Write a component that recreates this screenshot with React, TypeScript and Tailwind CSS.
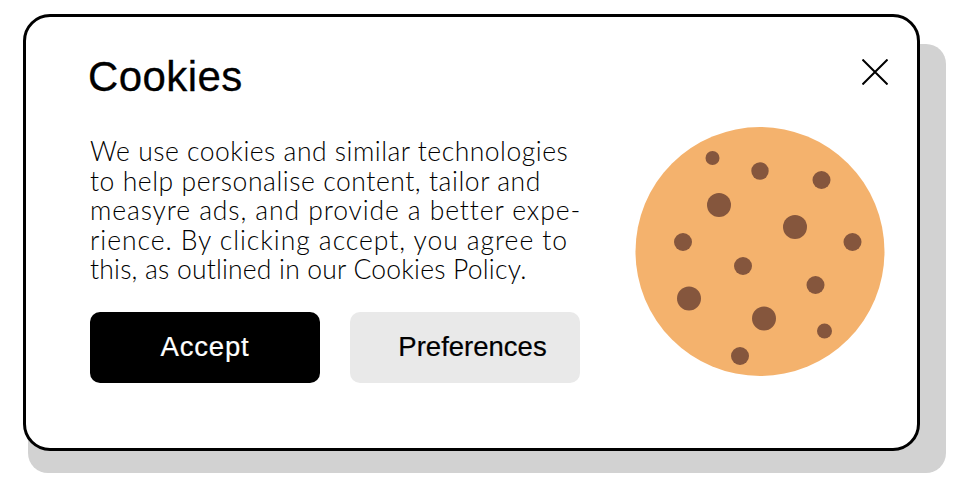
const chips = [
  [712, 158, 7], [759.5, 171, 8.7], [821, 180, 9], [718.5, 205, 12], [794.5, 227, 12],
  [682.5, 242, 9], [852, 242, 9], [742.5, 266, 9], [815, 285, 9], [688.5, 298.5, 12],
  [763.5, 318.5, 12], [824, 331, 7.5], [739.5, 356, 9],
];

export default function App() {
  return (
    <div className="h-[494px] w-[970px] overflow-hidden bg-white pl-[23px] pt-[14px]">
      <div className="relative h-[437px] w-[897px]">
        <div className="absolute left-[5px] top-[30px] h-[429px] w-[918px] rounded-[20px] bg-[#d2d2d2]" />
        <div className="relative flex h-full w-full rounded-[27px] border-[3px] border-black bg-white pl-[63px] pt-[35px]">
          <div className="flex w-[491px] flex-col">
            <h1 className="-ml-[1px] text-[42px] font-normal leading-[50px] tracking-[0.4px] text-black [font-family:'Liberation_Sans',sans-serif] [-webkit-text-stroke:0.3px_black]">Cookies</h1>
            <p className="ml-[1px] mt-[35px] whitespace-nowrap text-[26.5px] font-light leading-[29.5px] text-black [font-family:Lato,sans-serif]">
              <span className="block tracking-[0.5px]">We use cookies and similar technologies</span>
              <span className="block tracking-[0.55px]">to help personalise content, tailor and</span>
              <span className="block tracking-[0.9px]">measyre ads, and provide a better expe-</span>
              <span className="block tracking-[0.95px]">rience. By clicking accept, you agree to</span>
              <span className="block tracking-[0.2px]">this, as outlined in our Cookies Policy.</span>
            </p>
            <div className="ml-[1px] mt-[27px] flex gap-[30px] text-[27.5px] [font-family:'Liberation_Sans',sans-serif] [-webkit-text-stroke:0.2px]">
              <button className="h-[71px] w-[230px] rounded-[10px] bg-black tracking-[0.8px] text-white">Accept</button>
              <button className="h-[71px] w-[230px] rounded-[10px] bg-[#e9e9e9] pl-[15px] text-black">Preferences</button>
            </div>
          </div>
          <button className="absolute left-[836px] top-[42px] h-[26px] w-[26px]" aria-label="Close">
            <svg viewBox="0 0 26 26" className="h-full w-full" fill="none" stroke="black" strokeWidth="2">
              <path d="M0.5 0.5 L25.5 25.5 M25.5 0.5 L0.5 25.5" />
            </svg>
          </button>
          <div className="absolute left-[608.5px] top-[109px]">
            <svg width="250" height="252" viewBox="634.5 126 250 252">
              <circle cx="759.5" cy="251.5" r="124.5" fill="#f4b26d" />
              {chips.map(([x, y, r], i) => (
                <circle key={i} cx={x} cy={y} r={r} fill="#85563d" />
              ))}
            </svg>
          </div>
        </div>
      </div>
    </div>
  );
}
